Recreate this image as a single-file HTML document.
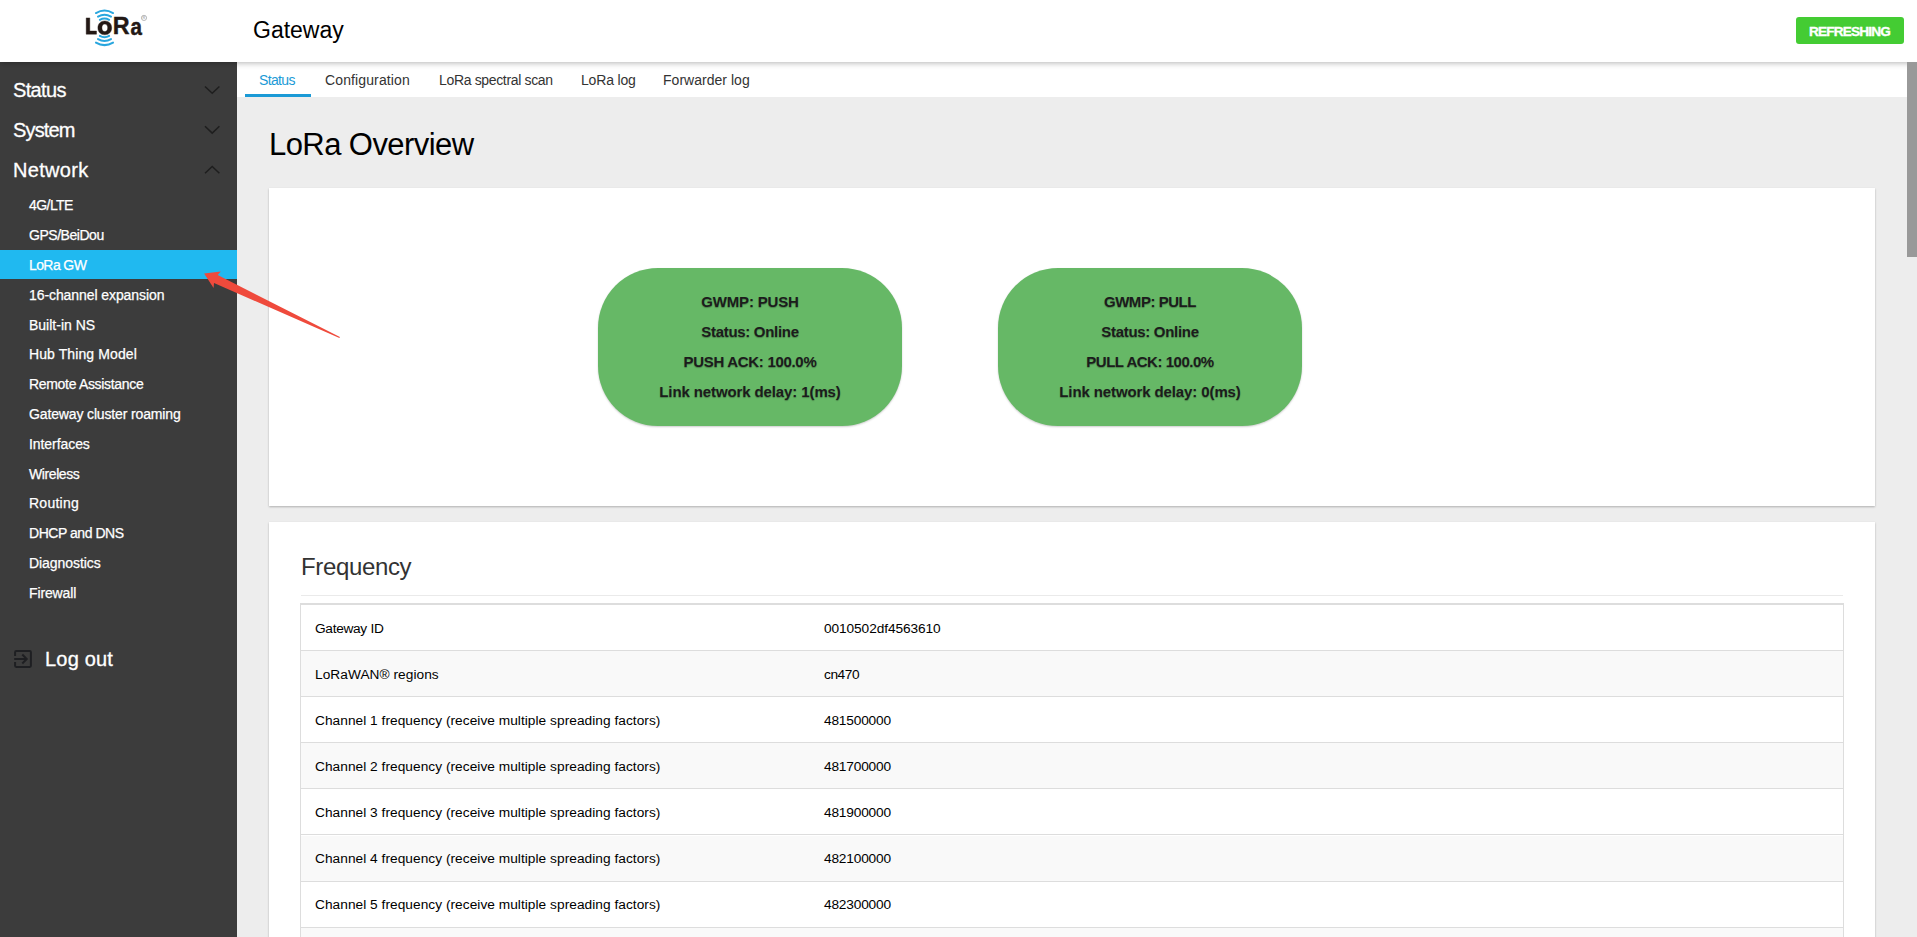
<!DOCTYPE html>
<html><head><meta charset="utf-8">
<style>
*{box-sizing:border-box;margin:0;padding:0}
html,body{width:1917px;height:937px;overflow:hidden}
body{position:relative;background:#ededed;font-family:"Liberation Sans",sans-serif;color:#000}
.abs{position:absolute}
#hdr{left:0;top:0;width:1917px;height:62px;background:#fff;box-shadow:0 1px 6px rgba(0,0,0,.3);z-index:5}
#side{left:0;top:62px;width:237px;height:875px;background:#3c3c3c;z-index:3}
#tabs{left:237px;top:62px;width:1670px;height:35px;background:#fff}
#thumb{left:1907px;top:62px;width:10px;height:195px;background:#999;z-index:6}
.t{position:absolute;white-space:nowrap;line-height:1}
.card{position:absolute;background:#fff;box-shadow:0 1px 2px rgba(0,0,0,.26)}
.gbox{position:absolute;width:304px;height:158px;background:#66b866;border-radius:60px;box-shadow:0 1px 2px rgba(0,0,0,.2)}
.gl{position:absolute;left:0;width:304px;text-align:center;font-weight:bold;font-size:15px;line-height:1;color:#1c1c1c;text-shadow:0 1px 1px rgba(0,0,0,.28)}
.row{position:absolute;left:0;width:1542px;height:46.1px;border-bottom:1px solid #dddddd}
.row.s{background:#f9f9f9}
.rl{position:absolute;left:14px;top:16.8px;font-size:13.7px;line-height:1;color:#000;white-space:nowrap}
.rv{position:absolute;left:523px;top:16.8px;font-size:13.7px;line-height:1;color:#000;white-space:nowrap;letter-spacing:-0.15px}
.si{position:absolute;left:29px;font-size:14px;line-height:1;color:#fff;white-space:nowrap;-webkit-text-stroke:0.25px #fff}
.mi{position:absolute;left:13px;font-size:20px;line-height:1;color:#fff;white-space:nowrap;-webkit-text-stroke:0.3px #fff}
.tab{position:absolute;top:11.05px;font-size:14px;line-height:1;color:#333;white-space:nowrap}
</style></head><body>

<div id="hdr" class="abs">
<svg class="abs" style="left:0;top:0" width="240" height="62" viewBox="0 0 240 62">
  <g fill="none" stroke="#29a6de" stroke-width="2.0" stroke-linecap="round">
    <path d="M95.95,13.04 A17.1,17.1 0 0 1 113.05,13.04"/>
    <path d="M95.95,42.66 A17.1,17.1 0 0 0 113.05,42.66"/>
    <path d="M98.00,16.59 A13.0,13.0 0 0 1 111.00,16.59"/>
    <path d="M98.00,39.11 A13.0,13.0 0 0 0 111.00,39.11"/>
    <path d="M99.85,19.80 A9.3,9.3 0 0 1 109.15,19.80"/>
    <path d="M99.85,35.90 A9.3,9.3 0 0 0 109.15,35.90"/>
  </g>
  <g fill="#231815" stroke="#231815" stroke-width="0.4">
    <path d="M86.2,17.9 H89.8 V31 H96.5 V34.2 H86.2 Z"/>
    <path fill-rule="evenodd" d="M104.8,20.9 C100.6,20.9 97.9,23.8 97.9,27.85 C97.9,31.9 100.6,34.8 104.8,34.8 C109,34.8 111.7,31.9 111.7,27.85 C111.7,23.8 109,20.9 104.8,20.9 Z M104.8,24.1 C106.6,24.1 107.7,25.6 107.7,27.85 C107.7,30.1 106.6,31.6 104.8,31.6 C103,31.6 101.9,30.1 101.9,27.85 C101.9,25.6 103,24.1 104.8,24.1 Z"/>
    <text x="112.8" y="34.3" font-family="Liberation Sans" font-weight="bold" font-size="23.3">R</text>
    <text x="130.6" y="34.8" font-family="Liberation Sans" font-weight="bold" font-size="20.5" transform="translate(0,-5.2) scale(1,1.15)">a</text>
  </g>
  <circle cx="144" cy="17.9" r="2.6" fill="none" stroke="#8a8a8a" stroke-width="0.6"/>
  <text x="142.6" y="19.3" font-family="Liberation Sans" font-size="3.8" fill="#8a8a8a">R</text>
</svg>
  <div class="t" style="left:253px;top:18.93px;font-size:23px;color:#000">Gateway</div>
  <div class="abs" style="left:1796px;top:17px;width:108px;height:27px;background:#44cc33;border-radius:3px"></div>
  <div class="t" style="left:1809px;top:24.99px;font-size:13.6px;font-weight:bold;color:#fff;letter-spacing:-0.8px;-webkit-text-stroke:0.35px #fff">REFRESHING</div>
</div>

<div id="side" class="abs">
<svg class="abs" style="left:0;top:0" width="237" height="875" viewBox="0 62 237 875">
  <g fill="none" stroke="#1e1e1e" stroke-width="1.5">
    <path d="M205,86.5 L212.2,93.3 L219.4,86.5"/>
    <path d="M205,126.3 L212.2,133.1 L219.4,126.3"/>
    <path d="M205,173.3 L212.2,166.5 L219.4,173.3"/>
  </g>
  <g fill="none" stroke="#1e1f22" stroke-width="2">
    <path d="M15.1,655.9 V652.2 Q15.1,651.1 16.2,651.1 H29.8 Q30.9,651.1 30.9,652.2 V665.8 Q30.9,666.9 29.8,666.9 H16.2 Q15.1,666.9 15.1,665.8 V662.1"/>
    <path d="M14.2,659 H26"/>
    <path d="M22.3,654.5 L26.7,659 L22.3,663.5"/>
  </g>
</svg>
  <div class="mi" style="top:17.97px;letter-spacing:-0.65px">Status</div>
  <div class="mi" style="top:57.97px;letter-spacing:-0.85px">System</div>
  <div class="mi" style="top:97.97px;letter-spacing:0.3px">Network</div>
  <div class="abs" style="left:0;top:188px;width:237px;height:29px;background:#20b9f0"></div>
  <div class="si" style="top:136.35px;letter-spacing:-0.55px;color:#ffffff">4G/LTE</div>
  <div class="si" style="top:166.15px;letter-spacing:-0.46px;color:#ffffff">GPS/BeiDou</div>
  <div class="si" style="top:195.95px;letter-spacing:-0.6px;color:#ffffff">LoRa GW</div>
  <div class="si" style="top:225.75px;letter-spacing:-0.08px;color:#ffffff">16-channel expansion</div>
  <div class="si" style="top:255.55px;letter-spacing:0.0px;color:#ffffff">Built-in NS</div>
  <div class="si" style="top:285.35px;letter-spacing:0.1px;color:#ffffff">Hub Thing Model</div>
  <div class="si" style="top:315.15px;letter-spacing:-0.32px;color:#ffffff">Remote Assistance</div>
  <div class="si" style="top:344.95px;letter-spacing:-0.14px;color:#ffffff">Gateway cluster roaming</div>
  <div class="si" style="top:374.75px;letter-spacing:-0.07px;color:#ffffff">Interfaces</div>
  <div class="si" style="top:404.55px;letter-spacing:-0.41px;color:#ffffff">Wireless</div>
  <div class="si" style="top:434.35px;letter-spacing:0.25px;color:#ffffff">Routing</div>
  <div class="si" style="top:464.15px;letter-spacing:-0.46px;color:#ffffff">DHCP and DNS</div>
  <div class="si" style="top:493.95px;letter-spacing:-0.07px;color:#ffffff">Diagnostics</div>
  <div class="si" style="top:523.75px;letter-spacing:-0.13px;color:#ffffff">Firewall</div>
  <div class="mi" style="left:45px;top:587.07px;letter-spacing:0.2px">Log out</div>
</div>

<div id="tabs" class="abs">
  <div class="tab" style="left:22px;color:#1b9ad6;letter-spacing:-0.65px">Status</div>
  <div class="abs" style="left:8px;top:32px;width:66px;height:3px;background:#1b9ad6"></div>
  <div class="tab" style="left:88px;letter-spacing:0.12px">Configuration</div>
  <div class="tab" style="left:202px;letter-spacing:-0.34px">LoRa spectral scan</div>
  <div class="tab" style="left:344px;letter-spacing:-0.18px">LoRa log</div>
  <div class="tab" style="left:426px;letter-spacing:0.03px">Forwarder log</div>
</div>
<div id="thumb" class="abs"></div>

<div class="t" style="left:269px;top:129.06px;font-size:31px;color:#000;letter-spacing:-0.57px">LoRa Overview</div>

<div class="card" style="left:269px;top:188px;width:1606px;height:318px">
  <div class="gbox" style="left:329px;top:80px">
    <div class="gl" style="top:25.50px;letter-spacing:-0.18px">GWMP: PUSH</div>
    <div class="gl" style="top:55.50px;letter-spacing:-0.31px">Status: Online</div>
    <div class="gl" style="top:85.50px;letter-spacing:-0.31px">PUSH ACK: 100.0%</div>
    <div class="gl" style="top:115.60px;letter-spacing:-0.11px">Link network delay: 1(ms)</div>
  </div>
  <div class="gbox" style="left:729px;top:80px">
    <div class="gl" style="top:25.50px;letter-spacing:-0.46px">GWMP: PULL</div>
    <div class="gl" style="top:55.50px;letter-spacing:-0.31px">Status: Online</div>
    <div class="gl" style="top:85.50px;letter-spacing:-0.48px">PULL ACK: 100.0%</div>
    <div class="gl" style="top:115.60px;letter-spacing:-0.11px">Link network delay: 0(ms)</div>
  </div>
</div>

<div class="card" style="left:269px;top:522px;width:1606px;height:500px">
  <div class="t" style="left:32px;top:32.98px;font-size:24px;color:#333;letter-spacing:-0.35px">Frequency</div>
  <div class="abs" style="left:32px;top:73px;width:1542px;height:1px;background:#eaeaea"></div>
  <div class="abs" style="left:31px;top:81px;width:1544px;height:500px;border:1px solid #dddddd;border-top:2px solid #dddddd">
    <div class="row" style="top:0.00px"><div class="rl" style="letter-spacing:-0.3px">Gateway ID</div><div class="rv" style="letter-spacing:-0.09px">0010502df4563610</div></div>
    <div class="row s" style="top:46.10px"><div class="rl" style="letter-spacing:0.05px">LoRaWAN® regions</div><div class="rv" style="letter-spacing:-0.44px">cn470</div></div>
    <div class="row" style="top:92.20px"><div class="rl" style="letter-spacing:0.04px">Channel 1 frequency (receive multiple spreading factors)</div><div class="rv" style="letter-spacing:-0.18px">481500000</div></div>
    <div class="row s" style="top:138.30px"><div class="rl" style="letter-spacing:0.04px">Channel 2 frequency (receive multiple spreading factors)</div><div class="rv" style="letter-spacing:-0.18px">481700000</div></div>
    <div class="row" style="top:184.40px"><div class="rl" style="letter-spacing:0.04px">Channel 3 frequency (receive multiple spreading factors)</div><div class="rv" style="letter-spacing:-0.18px">481900000</div></div>
    <div class="row s" style="top:230.50px"><div class="rl" style="letter-spacing:0.04px">Channel 4 frequency (receive multiple spreading factors)</div><div class="rv" style="letter-spacing:-0.18px">482100000</div></div>
    <div class="row" style="top:276.60px"><div class="rl" style="letter-spacing:0.04px">Channel 5 frequency (receive multiple spreading factors)</div><div class="rv" style="letter-spacing:-0.18px">482300000</div></div>
    <div class="row s" style="top:322.70px"><div class="rl" style="letter-spacing:0.04px"></div><div class="rv" style="letter-spacing:-0.18px"></div></div>
  </div>
</div>

<svg class="abs" style="left:0;top:0;z-index:8" width="400" height="400">
  <polygon fill="#ef4a3c" points="204.1,273.6 220.8,271.6 217.7,275 339.9,337.1 339.4,338.0 214,283.1 213.6,288.1"/>
</svg>
</body></html>
